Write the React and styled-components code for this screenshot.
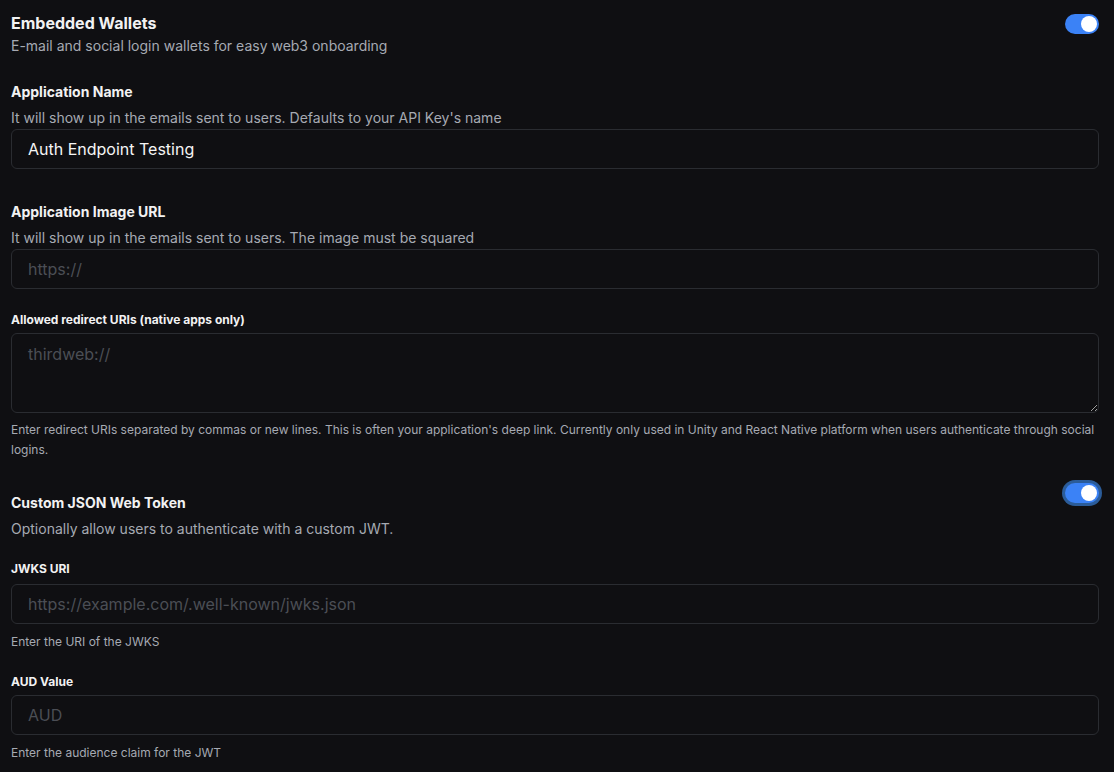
import React, { useState } from "react";
import styled, { createGlobalStyle } from "styled-components";

const GlobalStyle = createGlobalStyle`
  html, body {
    margin: 0;
    background: #0f0f12;
    font-family: Inter, "Noto Sans", sans-serif;
    color: #ededed;
  }
  * { box-sizing: border-box; }
`;

const Page = styled.div`
  padding: 12px 15px 0 11px;
  display: flex;
  flex-direction: column;
`;

const Section = styled.section`
  display: flex;
  flex-direction: column;
  margin-bottom: ${(p) => p.$gap || 0}px;
`;

const HeaderRow = styled.div`
  display: flex;
  justify-content: space-between;
  align-items: flex-start;
`;

const Heading = styled.h2`
  margin: 0;
  font-size: 16px;
  font-weight: 700;
  line-height: 22px;
  color: #f2f2f2;
`;

const Label = styled.div`
  font-size: ${(p) => (p.$small ? 12 : 14)}px;
  font-weight: 700;
  line-height: 20px;
  color: #f2f2f2;
  margin-top: ${(p) => p.$mt || 0}px;
  margin-bottom: ${(p) => p.$mb || 0}px;
`;

const Desc = styled.p`
  margin: 0;
  font-size: ${(p) => (p.$small ? 12 : 14)}px;
  line-height: 20px;
  color: #a6aab2;
  margin-top: ${(p) => p.$mt || 0}px;
  margin-bottom: ${(p) => p.$mb || 0}px;
`;

const Input = styled.input`
  width: 100%;
  height: 40px;
  background: transparent;
  border: 1px solid #2a2c31;
  border-radius: 6px;
  padding: 0 16px;
  font-family: inherit;
  font-size: 16px;
  color: #f5f5f5;
  outline: none;
  &::placeholder { color: #4b4e55; }
`;

const TextArea = styled.textarea`
  width: 100%;
  height: 80px;
  background: transparent;
  border: 1px solid #2a2c31;
  border-radius: 6px;
  padding: 8px 16px;
  font-family: inherit;
  font-size: 16px;
  line-height: 24px;
  color: #f5f5f5;
  outline: none;
  resize: vertical;
  display: block;
  &::placeholder { color: #4b4e55; }
`;

const SwitchTrack = styled.button`
  width: 34px;
  height: 20px;
  border-radius: 999px;
  border: none;
  padding: 2px;
  background: #3b82f6;
  display: flex;
  justify-content: flex-end;
  align-items: center;
  cursor: pointer;
  flex-shrink: 0;
  box-shadow: ${(p) => (p.$focused ? "0 0 0 3px #2b5c99" : "none")};
  margin-top: ${(p) => p.$mt || 0}px;
`;

const Knob = styled.span`
  width: 16px;
  height: 16px;
  border-radius: 50%;
  background: #fff;
`;

const Switch = ({ focused, mt }) => {
  const [on, setOn] = useState(true);
  return (
    <SwitchTrack $focused={focused} $mt={mt} onClick={() => setOn(!on)}>
      <Knob />
    </SwitchTrack>
  );
};

export default function App() {
  return (
    <>
      <GlobalStyle />
      <Page>
        <Section $gap={26}>
          <HeaderRow>
            <Heading>Embedded Wallets</Heading>
            <Switch mt={2} />
          </HeaderRow>
          <Desc $mt={2}>E-mail and social login wallets for easy web3 onboarding</Desc>
        </Section>

        <Section $gap={33}>
          <Label>Application Name</Label>
          <Desc $mt={6} $mb={1}>It will show up in the emails sent to users. Defaults to your API Key's name</Desc>
          <Input defaultValue="Auth Endpoint Testing" />
        </Section>

        <Section $gap={21}>
          <Label>Application Image URL</Label>
          <Desc $mt={6} $mb={1}>It will show up in the emails sent to users. The image must be squared</Desc>
          <Input placeholder="https://" />
        </Section>

        <Section $gap={23}>
          <Label $small $mb={3}>Allowed redirect URIs (native apps only)</Label>
          <TextArea placeholder="thirdweb://" />
          <Desc $small $mt={7}>
            Enter redirect URIs separated by commas or new lines. This is often your application's deep link. Currently only used in Unity and React Native platform when users authenticate through social logins.
          </Desc>
        </Section>

        <Section $gap={20}>
          <HeaderRow>
            <Label $mt={10}>Custom JSON Web Token</Label>
            <Switch focused />
          </HeaderRow>
          <Desc $mt={6}>Optionally allow users to authenticate with a custom JWT.</Desc>
        </Section>

        <Section $gap={20}>
          <Label $small $mb={5}>JWKS URI</Label>
          <Input placeholder="https://example.com/.well-known/jwks.json" />
          <Desc $small $mt={8}>Enter the URI of the JWKS</Desc>
        </Section>

        <Section>
          <Label $small $mb={3}>AUD Value</Label>
          <Input placeholder="AUD" />
          <Desc $small $mt={8}>Enter the audience claim for the JWT</Desc>
        </Section>
      </Page>
    </>
  );
}
